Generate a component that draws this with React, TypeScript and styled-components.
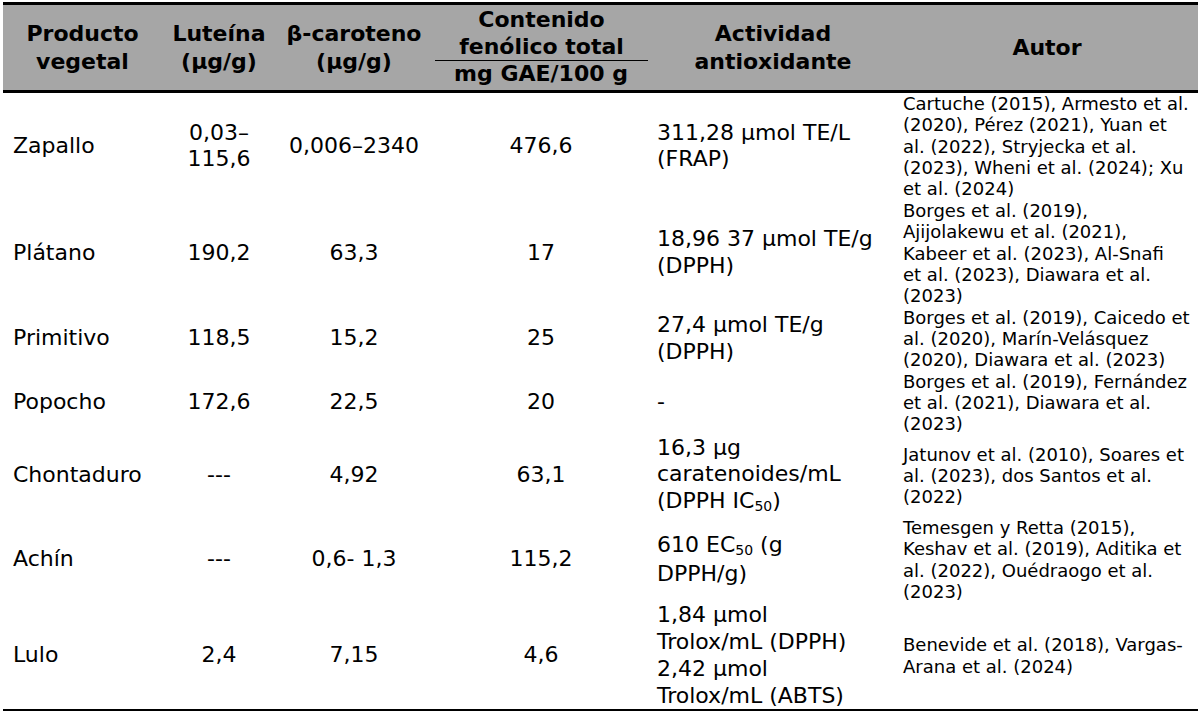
import React from 'react'
import styled, { createGlobalStyle } from 'styled-components'

const GlobalStyle = createGlobalStyle`
  html, body {
    margin: 0;
    padding: 0;
    background: #fff;
  }
  body {
    font-family: "DejaVu Sans", Verdana, sans-serif;
    color: #000;
  }
`

const Table = styled.table`
  width: 1195px;
  margin: 2px 0 0 3px;
  border-collapse: separate;
  border-spacing: 0;
  table-layout: fixed;
`

type Align = 'left' | 'center'

const HeadCell = styled.th<{ $split?: boolean }>`
  background: #a6a6a6;
  border-top: 3px solid #000;
  border-bottom: 3px solid #000;
  padding: 2px 0;
  font-size: 22px;
  line-height: ${({ $split }) => ($split ? '26.7px' : '28px')};
  font-weight: bold;
  text-align: center;
  vertical-align: middle;
  white-space: nowrap;
`

const HeadTop = styled.div`
  margin: 0 2px 0 3px;
  border-bottom: 1px solid #000;
`

const Cell = styled.td<{ $align?: Align; $pad?: number }>`
  padding: 0 0 0 ${({ $pad }) => $pad ?? 0}px;
  font-size: 22px;
  line-height: 26.7px;
  text-align: ${({ $align }) => $align ?? 'center'};
  vertical-align: middle;
  white-space: nowrap;
  tr:last-child > & {
    border-bottom: 2px solid #000;
  }
`

const AuthorCell = styled(Cell)`
  font-size: 18px;
  line-height: 21.35px;
`

const Sub = styled.sub`
  font-size: 14px;
  line-height: 22px;
  vertical-align: -3px;
`

type Row = {
  name: string
  lutein: React.ReactNode
  carotene: string
  phenolic: string
  activity: React.ReactNode[]
  authors: string[]
}

const rows: Row[] = [
  {
    name: 'Zapallo',
    lutein: (
      <>
        0,03–
        <br />
        115,6
      </>
    ),
    carotene: '0,006–2340',
    phenolic: '476,6',
    activity: ['311,28 µmol TE/L', '(FRAP)'],
    authors: [
      'Cartuche (2015), Armesto et al.',
      '(2020), Pérez (2021), Yuan et',
      'al. (2022), Stryjecka et al.',
      '(2023), Wheni et al. (2024); Xu',
      'et al. (2024)',
    ],
  },
  {
    name: 'Plátano',
    lutein: '190,2',
    carotene: '63,3',
    phenolic: '17',
    activity: ['18,96 37 µmol TE/g', '(DPPH)'],
    authors: [
      'Borges et al. (2019),',
      'Ajijolakewu et al. (2021),',
      'Kabeer et al. (2023), Al-Snafi',
      'et al. (2023), Diawara et al.',
      '(2023)',
    ],
  },
  {
    name: 'Primitivo',
    lutein: '118,5',
    carotene: '15,2',
    phenolic: '25',
    activity: ['27,4 µmol TE/g', '(DPPH)'],
    authors: [
      'Borges et al. (2019), Caicedo et',
      'al. (2020), Marín-Velásquez',
      '(2020), Diawara et al. (2023)',
    ],
  },
  {
    name: 'Popocho',
    lutein: '172,6',
    carotene: '22,5',
    phenolic: '20',
    activity: ['-'],
    authors: [
      'Borges et al. (2019), Fernández',
      'et al. (2021), Diawara et al.',
      '(2023)',
    ],
  },
  {
    name: 'Chontaduro',
    lutein: '---',
    carotene: '4,92',
    phenolic: '63,1',
    activity: [
      '16,3 µg',
      'caratenoides/mL',
      <>
        (DPPH IC<Sub>50</Sub>)
      </>,
    ],
    authors: [
      'Jatunov et al. (2010), Soares et',
      'al. (2023), dos Santos et al.',
      '(2022)',
    ],
  },
  {
    name: 'Achín',
    lutein: '---',
    carotene: '0,6- 1,3',
    phenolic: '115,2',
    activity: [
      <>
        610 EC<Sub>50</Sub> (g
      </>,
      'DPPH/g)',
    ],
    authors: [
      'Temesgen y Retta (2015),',
      'Keshav et al. (2019), Aditika et',
      'al. (2022), Ouédraogo et al.',
      '(2023)',
    ],
  },
  {
    name: 'Lulo',
    lutein: '2,4',
    carotene: '7,15',
    phenolic: '4,6',
    activity: ['1,84 µmol', 'Trolox/mL (DPPH)', '2,42 µmol', 'Trolox/mL (ABTS)'],
    authors: ['Benevide et al. (2018), Vargas-', 'Arana et al. (2024)'],
  },
]

function Lines({ items }: { items: React.ReactNode[] }) {
  return (
    <>
      {items.map((item, i) => (
        <React.Fragment key={i}>
          {i > 0 && <br />}
          {item}
        </React.Fragment>
      ))}
    </>
  )
}

export default function App() {
  return (
    <>
      <GlobalStyle />
      <Table>
        <colgroup>
          <col style={{ width: 159 }} />
          <col style={{ width: 114 }} />
          <col style={{ width: 156 }} />
          <col style={{ width: 218 }} />
          <col style={{ width: 246 }} />
          <col style={{ width: 302 }} />
        </colgroup>
        <thead>
          <tr>
            <HeadCell>
              Producto
              <br />
              vegetal
            </HeadCell>
            <HeadCell>
              Luteína
              <br />
              (µg/g)
            </HeadCell>
            <HeadCell>
              β-caroteno
              <br />
              (µg/g)
            </HeadCell>
            <HeadCell $split>
              <HeadTop>
                Contenido
                <br />
                fenólico total
              </HeadTop>
              mg GAE/100 g
            </HeadCell>
            <HeadCell>
              Actividad
              <br />
              antioxidante
            </HeadCell>
            <HeadCell>Autor</HeadCell>
          </tr>
        </thead>
        <tbody>
          {rows.map((r) => (
            <tr key={r.name}>
              <Cell $align="left" $pad={10}>
                {r.name}
              </Cell>
              <Cell>{r.lutein}</Cell>
              <Cell>{r.carotene}</Cell>
              <Cell>{r.phenolic}</Cell>
              <Cell $align="left" $pad={7}>
                <Lines items={r.activity} />
              </Cell>
              <AuthorCell $align="left" $pad={7}>
                <Lines items={r.authors} />
              </AuthorCell>
            </tr>
          ))}
        </tbody>
      </Table>
    </>
  )
}
